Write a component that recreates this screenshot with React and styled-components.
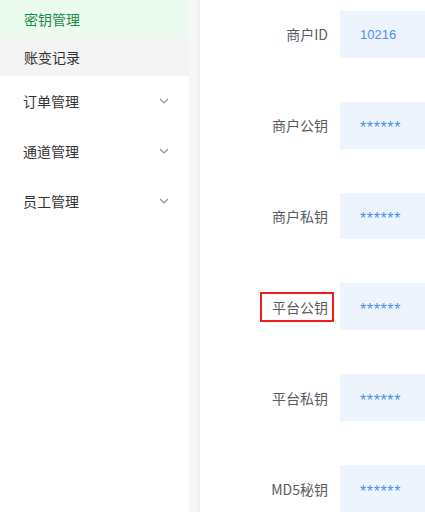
import React from "react";
import styled, { createGlobalStyle } from "styled-components";

const GlobalStyle = createGlobalStyle`
  html, body {
    margin: 0;
    padding: 0;
    background: #fff;
    overflow: hidden;
  }
  body {
    font-family: "Noto Sans CJK SC", "Liberation Sans", sans-serif;
  }
`;

const subItems = [
  { name: "密钥管理", active: true },
  { name: "账变记录", active: false },
];

const menus = ["订单管理", "通道管理", "员工管理"];

const fields = [
  { label: "商户ID", value: "10216" },
  { label: "商户公钥", value: "******", masked: true },
  { label: "商户私钥", value: "******", masked: true },
  { label: "平台公钥", value: "******", masked: true, marked: true },
  { label: "平台私钥", value: "******", masked: true },
  { label: "MD5秘钥", value: "******", masked: true },
];

function Chevron() {
  return (
    <svg width="10" height="6" viewBox="0 0 10 6">
      <polyline
        points="1,1 5,5 9,1"
        fill="none"
        stroke="#909399"
        strokeWidth="1.2"
      />
    </svg>
  );
}

function App() {
  return (
    <>
      <GlobalStyle />
      <Layout>
        <Sidebar>
          {subItems.map((item) => (
            <SubItem key={item.name} active={item.active}>
              {item.name}
            </SubItem>
          ))}
          {menus.map((m) => (
            <MenuItem key={m}>
              <span>{m}</span>
              <Chevron />
            </MenuItem>
          ))}
        </Sidebar>
        <Gutter />
        <Main>
          {fields.map((f) => (
            <Row key={f.label}>
              <LabelCell>
                <Label marked={f.marked}>{f.label}</Label>
              </LabelCell>
              <ValueBox masked={f.masked}>{f.value}</ValueBox>
            </Row>
          ))}
        </Main>
      </Layout>
    </>
  );
}

export default App;

const Layout = styled.div`
  display: flex;
  width: 425px;
  height: 512px;
`;

const Sidebar = styled.div`
  width: 189px;
  flex-shrink: 0;
  background: #fff;
`;

const SubItem = styled.div`
  height: 38px;
  display: flex;
  align-items: center;
  padding-left: 24px;
  font-size: 14px;
  color: ${(p) => (p.active ? "#1f8a4c" : "#333")};
  background: ${(p) => (p.active ? "#ebfbef" : "#f4f4f4")};
`;

const MenuItem = styled.div`
  height: 50px;
  display: flex;
  align-items: center;
  justify-content: space-between;
  padding: 0 20px 0 23px;
  font-size: 14px;
  color: #333;
`;

const Gutter = styled.div`
  width: 11px;
  flex-shrink: 0;
  background: linear-gradient(to right, #f7f7f7 0%, #f5f5f5 70%, #ececec 100%);
`;

const Main = styled.div`
  flex: 1;
  display: flex;
  flex-direction: column;
  gap: 44px;
  padding-top: 11px;
  background: #fff;
`;

const Row = styled.div`
  display: grid;
  grid-template-columns: 140px 1fr;
  height: 48px;
`;

const LabelCell = styled.div`
  display: flex;
  align-items: center;
  justify-content: flex-end;
  padding-right: 12px;
`;

const Label = styled.span`
  font-size: 14px;
  color: #5a5c61;
  line-height: 20px;
  ${(p) =>
    p.marked &&
    `
    border: 2px solid #f21a1a;
    padding: 3px 4px 3px 10px;
    margin-right: -6px;
  `}
`;

const ValueBox = styled.div`
  display: flex;
  align-items: center;
  padding-left: 20px;
  background: #eef4fe;
  font-size: ${(p) => (p.masked ? "16px" : "13px")};
  color: #4b91ee;
  font-family: "Liberation Sans", "Noto Sans CJK SC", sans-serif;
  letter-spacing: ${(p) => (p.masked ? "0.6px" : "0")};
  padding-top: ${(p) => (p.masked ? "6px" : "0")};
`;
